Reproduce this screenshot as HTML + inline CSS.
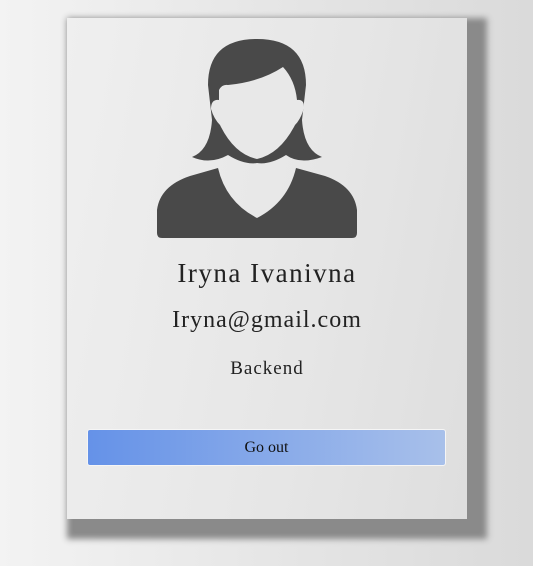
<!DOCTYPE html>
<html><head><style>
html,body{margin:0;padding:0;}
body{width:533px;height:566px;overflow:hidden;background:linear-gradient(90deg,#f3f3f3 0%,#e6e6e6 50%,#dadada 100%);font-family:"Liberation Serif",serif;position:relative;}
.card{position:absolute;left:67px;top:18px;width:400px;height:501px;background:linear-gradient(100deg,#efefef 0%,#e6e6e6 60%,#dedede 100%);box-shadow:10px 10px 6px 10px #8a8a8a;}
.t{position:absolute;left:0;width:400px;text-align:center;color:#222;}
.btn{position:absolute;left:20px;top:411px;width:357px;height:35px;border:1px solid #f5f5f5;border-radius:3px;background:linear-gradient(90deg,#6592e8,#a8c0ea);text-align:center;line-height:35px;font-size:16px;color:#111;}
</style></head><body>
<div class="card">
<svg width="400" height="240" viewBox="67 18 400 240" style="position:absolute;left:0;top:0">
<path d="M157,233 L157,210 Q160,186 190,176 L218,168 Q226,202 257,218 Q288,202 296,168 L325,176 Q354,186 357,210 L357,233 Q357,238 352,238 L162,238 Q157,238 157,233 Z" fill="#494949"/>
<path d="M192,157 Q210,150 212,120 L208,85 Q208,39 257,39 Q306,39 306,85 L302,120 Q304,150 322,157 Q300,165 286,155 Q270,165 257,163 Q244,165 228,155 Q210,165 192,157 Z" fill="#494949"/>
<path d="M219,90 Q222,84 228,85 Q260,82 283,67 Q295,80 297,100 Q306,99 303,111 Q300,120 295,125 Q280,154 257,159 Q234,154 220,125 Q214,119 211,109 Q211,99 219,100 Z" fill="#e8e8e8"/>
</svg>
<div class="t" style="top:240px;font-size:27px;letter-spacing:1.5px;">Iryna Ivanivna</div>
<div class="t" style="top:289px;font-size:24px;letter-spacing:1px;">Iryna@gmail.com</div>
<div class="t" style="top:340px;font-size:19px;letter-spacing:1px;">Backend</div>
<div class="btn">Go out</div>
</div>
</body></html>
